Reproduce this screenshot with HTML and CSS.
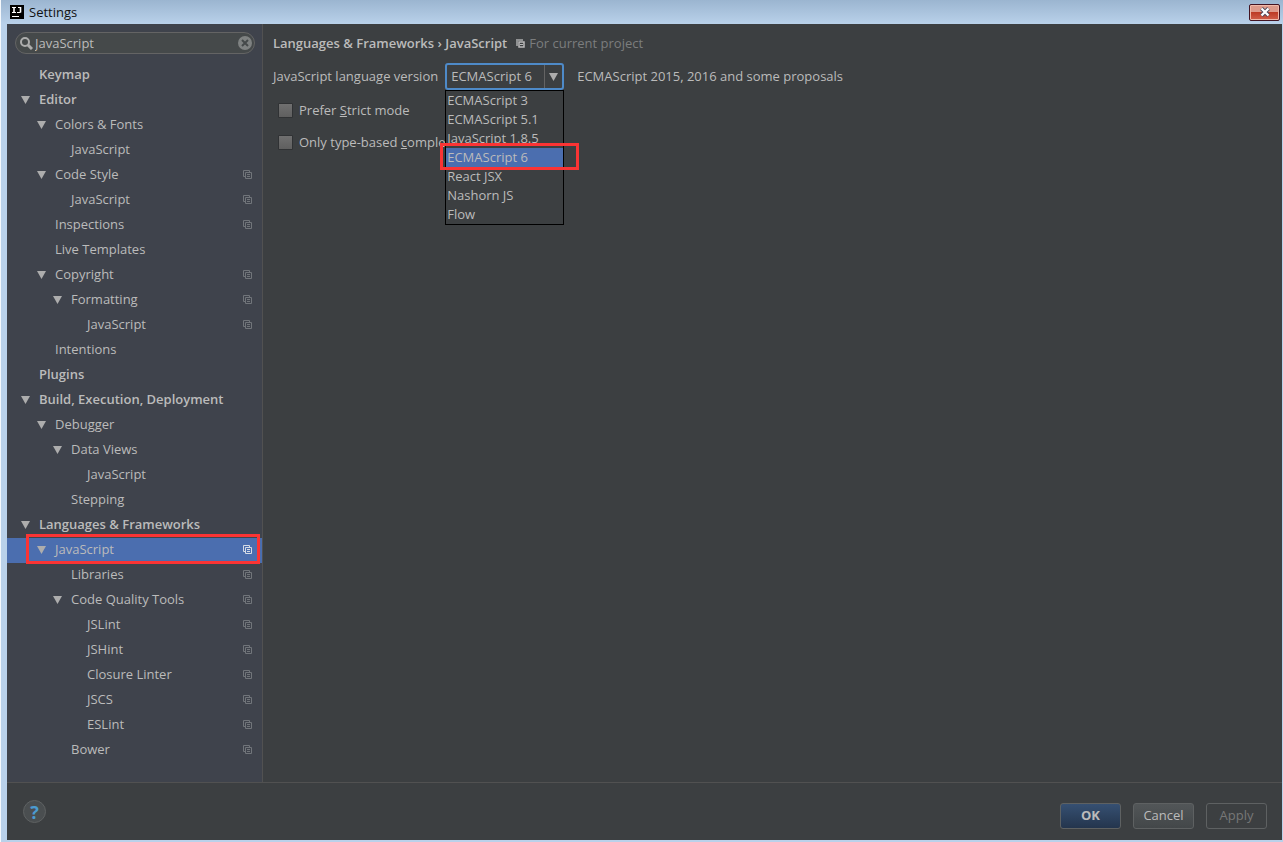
FILE: index.html
```html
<!DOCTYPE html>
<html lang="en">
<head>
<meta charset="utf-8">
<title>Settings</title>
<link rel="stylesheet" href="styles.css">
</head>
<body>
<svg class="defs" aria-hidden="true">
  <symbol id="copy" viewBox="0 0 9 9"><path d="M2.5 6.5H.5V.5h6v2M2.5 2.5h6v6h-6zM4 4.5h3M4 6.5h3" fill="none" stroke="currentColor"/></symbol>
  <symbol id="arrow" viewBox="0 0 9 8"><path d="M0 0h9L4.5 8z" fill="currentColor"/></symbol>
</svg>
<div class="window">
  <header class="titlebar">
    <svg class="logo" viewBox="0 0 14 14" aria-hidden="true"><path d="M0 0h14v14H0z" fill="#000"/><path d="M2 2.500h4M2 7.500h4M8 2.500h3M7 7.500h3.500M2 11.500h7" fill="none" stroke="#fff"/><path d="M4 2v6M10.500 2v5.500" fill="none" stroke="#fff" stroke-width="1.600"/></svg>
    <h1 class="title">Settings</h1>
    <button class="close" type="button" aria-label="Close"><svg viewBox="0 0 12 10" aria-hidden="true"><path d="M2.500 1.500 9.500 8.500M9.500 1.500 2.500 8.500" stroke="#4b4a5c" stroke-width="4"/><path d="M2.500 1.500 9.500 8.500M9.500 1.500 2.500 8.500" stroke="#fff" stroke-width="2.300"/></svg></button>
  </header>
  <div class="frame">
    <div class="body">
      <nav class="sidebar" aria-label="Settings sections">
        <div class="search">
          <svg class="lens" viewBox="0 0 13 13" aria-hidden="true"><circle cx="5" cy="5" r="4" fill="none" stroke="currentColor" stroke-width="2"/><path d="m8 8 4 4" stroke="currentColor" stroke-width="3"/></svg>
          <input type="text" aria-label="Search settings" value="JavaScript">
          <button class="clear" type="button" aria-label="Clear search"><svg viewBox="0 0 14 14" aria-hidden="true"><circle cx="7" cy="7" r="7" fill="#7f8282"/><path d="m4 4 6 6m0-6-6 6" stroke="#45494a" stroke-width="2"/></svg></button>
        </div>
        <ul class="tree">
          <li class="row top leaf"><span>Keymap</span></li>
          <li class="row top"><svg class="arrow"><use href="#arrow"/></svg><span>Editor</span></li>
          <li class="row l1"><svg class="arrow"><use href="#arrow"/></svg><span>Colors &amp; Fonts</span></li>
          <li class="row l2 leaf"><span>JavaScript</span></li>
          <li class="row l1"><svg class="arrow"><use href="#arrow"/></svg><span>Code Style</span><svg class="copy"><use href="#copy"/></svg></li>
          <li class="row l2 leaf"><span>JavaScript</span><svg class="copy"><use href="#copy"/></svg></li>
          <li class="row l1 leaf"><span>Inspections</span><svg class="copy"><use href="#copy"/></svg></li>
          <li class="row l1 leaf"><span>Live Templates</span></li>
          <li class="row l1"><svg class="arrow"><use href="#arrow"/></svg><span>Copyright</span><svg class="copy"><use href="#copy"/></svg></li>
          <li class="row l2"><svg class="arrow"><use href="#arrow"/></svg><span>Formatting</span><svg class="copy"><use href="#copy"/></svg></li>
          <li class="row l3 leaf"><span>JavaScript</span><svg class="copy"><use href="#copy"/></svg></li>
          <li class="row l1 leaf"><span>Intentions</span></li>
          <li class="row top leaf"><span>Plugins</span></li>
          <li class="row top"><svg class="arrow"><use href="#arrow"/></svg><span>Build, Execution, Deployment</span></li>
          <li class="row l1"><svg class="arrow"><use href="#arrow"/></svg><span>Debugger</span></li>
          <li class="row l2"><svg class="arrow"><use href="#arrow"/></svg><span>Data Views</span></li>
          <li class="row l3 leaf"><span>JavaScript</span></li>
          <li class="row l2 leaf"><span>Stepping</span></li>
          <li class="row top"><svg class="arrow"><use href="#arrow"/></svg><span>Languages &amp; Frameworks</span></li>
          <li class="row l1 selected"><svg class="arrow"><use href="#arrow"/></svg><span>JavaScript</span><svg class="copy"><use href="#copy"/></svg></li>
          <li class="row l2 leaf"><span>Libraries</span><svg class="copy"><use href="#copy"/></svg></li>
          <li class="row l2"><svg class="arrow"><use href="#arrow"/></svg><span>Code Quality Tools</span><svg class="copy"><use href="#copy"/></svg></li>
          <li class="row l3 leaf"><span>JSLint</span><svg class="copy"><use href="#copy"/></svg></li>
          <li class="row l3 leaf"><span>JSHint</span><svg class="copy"><use href="#copy"/></svg></li>
          <li class="row l3 leaf"><span>Closure Linter</span><svg class="copy"><use href="#copy"/></svg></li>
          <li class="row l3 leaf"><span>JSCS</span><svg class="copy"><use href="#copy"/></svg></li>
          <li class="row l3 leaf"><span>ESLint</span><svg class="copy"><use href="#copy"/></svg></li>
          <li class="row l2 leaf"><span>Bower</span><svg class="copy"><use href="#copy"/></svg></li>
        </ul>
      </nav>
      <main class="content">
        <div class="crumbs">
          <h2>Languages &amp; Frameworks › JavaScript</h2>
          <svg class="copy" viewBox="0 0 9 9" aria-hidden="true"><path d="M0 0h7v2H2v5H0z" fill="#8f9192"/><path d="M3 3h5v5H3z" fill="none" stroke="#bbb" stroke-width="1.500"/><path d="M4 5.500h3" stroke="#bbb"/></svg>
          <span class="scope">For current project</span>
        </div>
        <div class="version">
          <label for="version">JavaScript language version</label>
          <div class="combo">
            <select id="version"><option>ECMAScript 6</option></select>
            <span class="drop"><svg class="arrow"><use href="#arrow"/></svg></span>
            <ul class="popup">
              <li>ECMAScript 3</li>
              <li>ECMAScript 5.1</li>
              <li>JavaScript 1.8.5</li>
              <li class="chosen">ECMAScript 6</li>
              <li>React JSX</li>
              <li>Nashorn JS</li>
              <li>Flow</li>
            </ul>
          </div>
          <span>ECMAScript 2015, 2016 and some proposals</span>
        </div>
        <label class="check"><input type="checkbox"><span>Prefer <u>S</u>trict mode</span></label>
        <label class="check"><input type="checkbox"><span>Only type-based <u>c</u>omplet</span></label>
      </main>
    </div>
    <footer class="footer">
      <button class="help" type="button" aria-label="Help">?</button>
      <button class="btn ok" type="button">OK</button>
      <button class="btn" type="button">Cancel</button>
      <button class="btn" type="button" disabled>Apply</button>
    </footer>
  </div>
</div>
</body>
</html>
```
FILE: styles.css
```css
*, *::before, *::after { box-sizing: border-box; }
body { margin: 0; font: 13px/18px "Open Sans", "Noto Sans", sans-serif; color: #bbbbbb; }
button, input, select { font: inherit; color: inherit; margin: 0; padding: 0; }
ul { list-style: none; margin: 0; padding: 0; }
h1, h2 { margin: 0; font-size: 13px; font-weight: 600; }
svg { display: block; flex: none; }
.defs { position: absolute; width: 0; height: 0; }
.window {
  display: flex; flex-direction: column; min-height: 100vh;
  padding: 0 1px 2px 6px; border-left: 1px solid #f4f8fc; background: #b9d1ea;
}
.titlebar {
  display: flex; align-items: center; height: 24px; gap: 5px;
  margin: 0 -1px 0 -6px; padding: 0 3px 0 9px;
  background: linear-gradient(#9bb5d0, #b9d1ea);
}
.logo { width: 14px; height: 14px; }
.title { flex: 1; color: #111; font-weight: 400; }
.close {
  display: flex; align-items: center; justify-content: center; width: 31px; height: 17px;
  border: 1px solid #431422; border-radius: 2px; box-shadow: inset 0 0 0 1px #f0b9a9;
  background: linear-gradient(#dd9a8b 0 45%, #bd3b25 50%, #d2604b);
}
.close svg { width: 12px; height: 10px; }
.frame { flex: 1; display: flex; flex-direction: column; background: #3c3f41; }
.body { flex: 1; display: flex; }
.sidebar { width: 256px; background: #3f434c; border-right: 1px solid #515151; padding-top: 8px; }
.search {
  display: flex; align-items: center; gap: 2px; height: 22px; margin: 0 7px 0 8px; padding: 0 2px 0 4px;
  border: 1px solid #646464; border-radius: 11px; background: #45494a;
}
.lens { width: 13px; height: 13px; color: #adadad; }
.search input { flex: 1; min-width: 0; border: 0; outline: 0; background: none; }
.clear { border: 0; background: none; }
.clear svg { width: 14px; height: 14px; }
.tree { padding-top: 9px; }
.row { position: relative; display: flex; align-items: center; height: 25px; padding: 0 10px 2px 14px; gap: 9px; }
.row span { flex: 1; padding-bottom: 2px; white-space: nowrap; }
.row.top { font-weight: 600; }
.row.l1 { padding-left: 30px; }
.row.l2 { padding-left: 46px; }
.row.l3 { padding-left: 62px; }
.row.leaf::before { content: ""; width: 9px; }
.arrow { width: 9px; height: 8px; color: #adadad; }
.copy { width: 9px; height: 9px; color: #71757a; }
.selected { background: #4b6eaf; }
.selected .copy { color: #d5dbe5; }
.selected::after {
  content: ""; position: absolute; left: 19px; right: 2px; top: -4px; height: 30px;
  border: 3px solid #fb3434;
}
.content { flex: 1; padding: 10px; }
.crumbs { display: flex; align-items: center; }
.crumbs .copy { margin: 0 4px 0 9px; }
.scope { color: #7b7d7e; }
.version { display: flex; align-items: center; margin: 11px 0; }
.version > label, .version > span { padding-bottom: 2px; }
.combo {
  position: relative; display: flex; width: 119px; height: 27px; margin: 0 13px 0 7px;
  border: 2px solid #4e8ac8; border-radius: 3px;
}
.combo select {
  flex: 1; min-width: 0; appearance: none; border: 0; outline: 0; background: none; padding: 0 0 2px 4px;
}
.drop { display: flex; align-items: center; padding: 0 4px; border-left: 1px solid #646464; pointer-events: none; }
.popup {
  position: absolute; z-index: 1; top: 25px; left: -2px; right: -2px;
  border: 1px solid #000; background: #3c3f41;
}
.popup li { height: 19px; padding-left: 1px; white-space: nowrap; }
.popup .chosen { position: relative; background: #4b6eaf; }
.chosen::after {
  content: ""; position: absolute; left: -6px; right: -16px; top: -5px; height: 27px;
  border: 3px solid #fb3434;
}
.check { display: flex; align-items: center; height: 18px; margin: 0 0 14px 5px; gap: 6px; }
.check input {
  appearance: none; width: 15px; height: 15px; margin: 0; border: 1px solid #303234; border-radius: 1px;
  background: linear-gradient(#707070, #5f5f5f);
}
.footer {
  display: flex; align-items: center; gap: 12px; height: 58px; padding: 9px 15px 0 16px;
  border-top: 1px solid #515151;
}
.help {
  width: 23px; height: 23px; margin: 0 auto 9px 0; border: 1px solid #5e6162; border-radius: 50%;
  background: #4a4e50; color: #4b9bd0; font-size: 18px; font-weight: 700; line-height: 20px;
}
.btn {
  width: 61px; height: 26px; padding-bottom: 2px; border: 1px solid #5e6162; border-radius: 3px;
  background: linear-gradient(#525658, #434749);
}
.ok { background: linear-gradient(#365072, #24354d); font-weight: 700; }
.btn:disabled { background: none; color: #777; }
```
